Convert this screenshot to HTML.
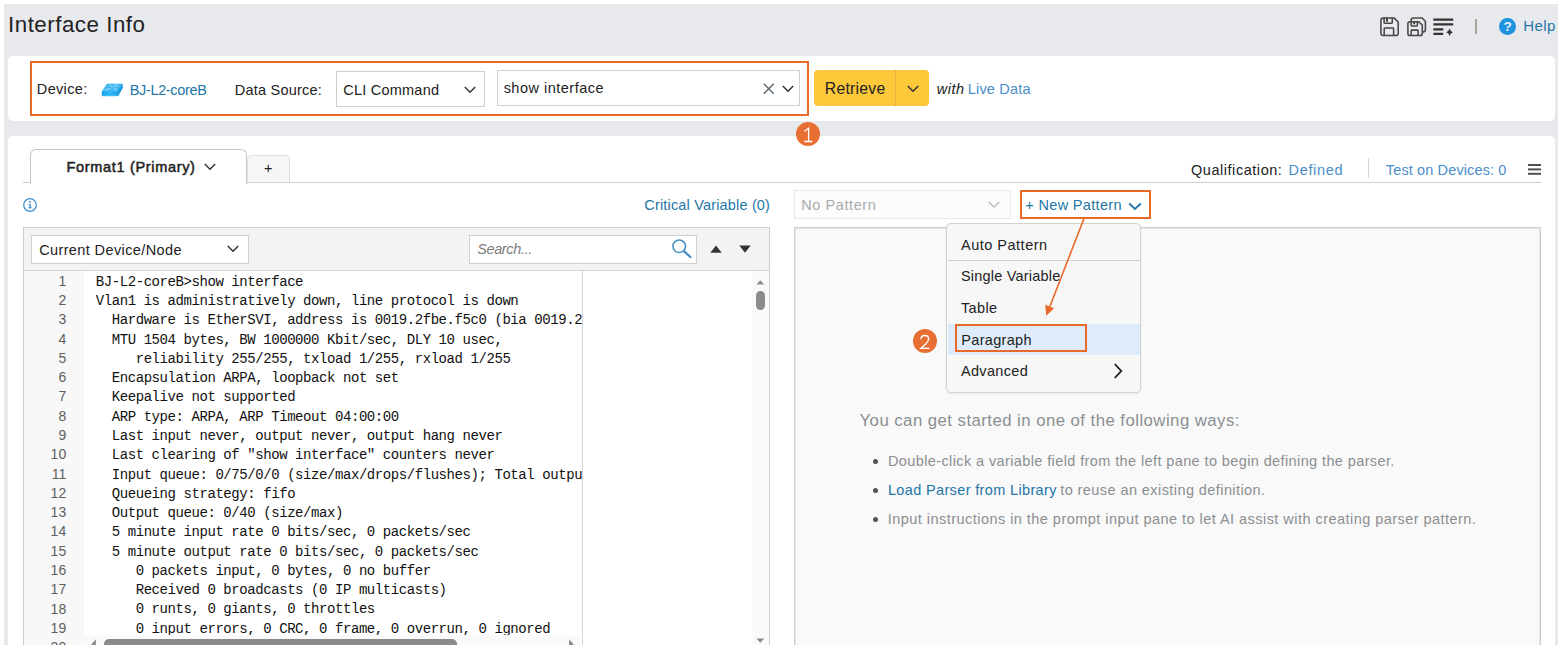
<!DOCTYPE html>
<html><head><meta charset="utf-8">
<style>
*{box-sizing:border-box;margin:0;padding:0}
html,body{width:1561px;height:649px;overflow:hidden;background:#fff}
body{font-family:"Liberation Sans",sans-serif;color:#222;position:relative}
.a{position:absolute}
.t{position:absolute;white-space:nowrap;line-height:1}
.ob{border:2px solid #e8692a}
.sel{background:#fff;border:1px solid #cfcfcf}
.mono{font-family:"Liberation Mono",monospace}
.ln,.cl{height:19.29px;line-height:19.29px;white-space:pre}
.ln{font-family:"Liberation Sans",sans-serif;font-size:14px;letter-spacing:0.1px;color:#606060}
.cl{font-size:14px;letter-spacing:-0.429px;color:#111}
</style></head><body>
<div class="a" style="left:4px;top:4px;width:1554px;height:645px;background:#e8e9ed"></div>
<div class="a" style="left:8px;top:56px;width:1546.5px;height:64.5px;background:#fff;border-radius:5px"></div>
<div class="a" style="left:8px;top:135.5px;width:1546.5px;height:520px;background:#fff;border-radius:5px"></div>

<!-- top panel -->
<div class="a ob" style="left:30px;top:61px;width:779px;height:55px"></div>
<div class="a sel" style="left:336px;top:71px;width:149px;height:36px"></div>
<div class="a sel" style="left:497px;top:70px;width:303px;height:36px"></div>
<div class="a" style="left:814px;top:70px;width:115px;height:36px;background:#fdc93a;border-radius:4px"></div>
<div class="a" style="left:895px;top:70px;width:1px;height:36px;background:#ecae42"></div>
<svg class="a" style="left:101px;top:83.4px" width="23" height="14" viewBox="0 0 23 14"><defs><linearGradient id="dg" x1="0" x2="1"><stop offset="0" stop-color="#1aa2ea"/><stop offset="0.5" stop-color="#2cbcfb"/><stop offset="1" stop-color="#1a9fe6"/></linearGradient></defs><path d="M6 1 H21.3 L16.5 8.6 H1 Z" fill="#45bbf3" stroke="#45bbf3" stroke-width="0.6" stroke-linejoin="round"/><path d="M1 8.6 H16.5 L17 12.8 H1 Z" fill="url(#dg)" stroke="#1fa8ee" stroke-width="0.6" stroke-linejoin="round"/><path d="M21.3 1 L21.7 4.5 L17.2 12.8 L16.5 8.6 Z" fill="#1b9be2" stroke="#1b9be2" stroke-width="0.6" stroke-linejoin="round"/><path d="M4.5 7 L9.3 5.3 M12.3 3.4 L16.8 2 M9 2.2 L10.8 3.6 M13 5 L15.6 7" stroke="#a6defa" stroke-width="0.9" stroke-linecap="round" fill="none"/></svg>
<svg class="a" style="left:463.5px;top:86px" width="12" height="8" viewBox="0 0 12 8"><path d="M0.8 1 L6 6.2 L11.2 1" fill="none" stroke="#333" stroke-width="1.5"/></svg>
<svg class="a" style="left:763px;top:83px" width="12" height="12" viewBox="0 0 12 12"><path d="M0.8 0.8 L10.7 10.7 M10.7 0.8 L0.8 10.7" stroke="#5a6872" stroke-width="1.4"/></svg>
<svg class="a" style="left:781.5px;top:85px" width="12" height="8" viewBox="0 0 12 8"><path d="M0.8 1 L6 6.2 L11.2 1" fill="none" stroke="#333" stroke-width="1.5"/></svg>
<svg class="a" style="left:906.5px;top:85px" width="12" height="8" viewBox="0 0 12 8"><path d="M0.8 1 L6 6.2 L11.2 1" fill="none" stroke="#333" stroke-width="1.5"/></svg>

<!-- circle 1 -->
<div class="a" style="left:796px;top:122px;width:24px;height:24px;border-radius:50%;background:#e86f33"></div>
<svg class="a" style="left:796px;top:122px" width="24" height="24" viewBox="796 122 24 24"><path d="M804.3 131.2 L808.6 128.3 V141.4 M804.2 141.5 H812.4" fill="none" stroke="#fff" stroke-width="1.35"/></svg>

<!-- tabs -->
<div class="a" style="left:23px;top:182px;width:1518px;height:1px;background:#cfcfcf"></div>
<div class="a" style="left:29.5px;top:149px;width:217px;height:35px;background:#fff;border:1.3px solid #c6c9cb;border-bottom:none;border-radius:6px 6px 0 0"></div>
<div class="a" style="left:246.5px;top:155px;width:43.5px;height:27px;background:#f6f6f6;border:1px solid #dedede;border-bottom:none;border-radius:5px 5px 0 0"></div>
<svg class="a" style="left:203.5px;top:163px" width="12" height="8" viewBox="0 0 12 8"><path d="M0.8 1 L6 6.2 L11.2 1" fill="none" stroke="#333" stroke-width="1.4"/></svg>
<div class="a" style="left:1367.5px;top:157.5px;width:1px;height:20px;background:#d8d8d8"></div>
<div class="a" style="left:1528px;top:164.2px;width:13px;height:1.5px;background:#505050;box-shadow:0 4.4px 0 #505050,0 8.8px 0 #505050"></div>

<!-- info row -->
<svg class="a" style="left:22.4px;top:196.6px" width="16" height="16" viewBox="0 0 16 16"><circle cx="8" cy="8" r="6.3" fill="none" stroke="#3a8fd0" stroke-width="1.2"/><rect x="7.3" y="7" width="1.5" height="4" fill="#3a8fd0"/><rect x="6.4" y="10.3" width="3.3" height="1" fill="#3a8fd0"/><rect x="6.6" y="7" width="1.5" height="1" fill="#3a8fd0"/><circle cx="8" cy="5" r="0.95" fill="#3a8fd0"/></svg>

<!-- left pane -->
<div class="a" style="left:23px;top:227px;width:747px;height:430px;background:#fff;border:1px solid #cecece;box-shadow:inset 0 0 0 1px #e9e9e9"></div>
<div class="a" style="left:24px;top:228px;width:745px;height:43px;background:#f3f3f3;border-bottom:1px solid #d6d6d6"></div>
<div class="a sel" style="left:31px;top:234.5px;width:218px;height:29.5px"></div>
<svg class="a" style="left:226.5px;top:245px" width="12" height="8" viewBox="0 0 12 8"><path d="M0.8 1 L6 6.2 L11.2 1" fill="none" stroke="#333" stroke-width="1.5"/></svg>
<div class="a sel" style="left:469px;top:234.5px;width:228px;height:29.5px"></div>
<svg class="a" style="left:670px;top:237px" width="24" height="23" viewBox="0 0 24 23"><circle cx="9.2" cy="9.3" r="6.3" fill="none" stroke="#4590c4" stroke-width="1.5"/><path d="M13.9 14.2 L20.4 20" stroke="#4590c4" stroke-width="2.3" stroke-linecap="round"/></svg>
<svg class="a" style="left:709.5px;top:245px" width="12" height="8" viewBox="0 0 12 8"><path d="M0.3 7.8 L6 0.4 L11.7 7.8 Z" fill="#333"/></svg>
<svg class="a" style="left:738.5px;top:245px" width="12" height="8" viewBox="0 0 12 8"><path d="M0.3 0.4 L6 7.8 L11.7 0.4 Z" fill="#333"/></svg>

<!-- code -->
<div class="a" style="left:24px;top:271px;width:728px;height:378px;overflow:hidden;background:#fff">
 <div class="a" style="left:0;top:0;width:60px;height:400px;background:#f8f8f8"></div>
 <div class="a" style="left:0;top:0.8px;width:42.4px;text-align:right"><div class="ln">1</div><div class="ln">2</div><div class="ln">3</div><div class="ln">4</div><div class="ln">5</div><div class="ln">6</div><div class="ln">7</div><div class="ln">8</div><div class="ln">9</div><div class="ln">10</div><div class="ln">11</div><div class="ln">12</div><div class="ln">13</div><div class="ln">14</div><div class="ln">15</div><div class="ln">16</div><div class="ln">17</div><div class="ln">18</div><div class="ln">19</div><div class="ln">20</div></div>
 <div class="a mono" style="left:71.8px;top:1.7px;width:486.2px;overflow:hidden"><div class="cl">BJ-L2-coreB&gt;show interface</div><div class="cl">Vlan1 is administratively down, line protocol is down</div><div class="cl">  Hardware is EtherSVI, address is 0019.2fbe.f5c0 (bia 0019.2fbe.f5c0)</div><div class="cl">  MTU 1504 bytes, BW 1000000 Kbit/sec, DLY 10 usec,</div><div class="cl">     reliability 255/255, txload 1/255, rxload 1/255</div><div class="cl">  Encapsulation ARPA, loopback not set</div><div class="cl">  Keepalive not supported</div><div class="cl">  ARP type: ARPA, ARP Timeout 04:00:00</div><div class="cl">  Last input never, output never, output hang never</div><div class="cl">  Last clearing of &quot;show interface&quot; counters never</div><div class="cl">  Input queue: 0/75/0/0 (size/max/drops/flushes); Total output drops: 0</div><div class="cl">  Queueing strategy: fifo</div><div class="cl">  Output queue: 0/40 (size/max)</div><div class="cl">  5 minute input rate 0 bits/sec, 0 packets/sec</div><div class="cl">  5 minute output rate 0 bits/sec, 0 packets/sec</div><div class="cl">     0 packets input, 0 bytes, 0 no buffer</div><div class="cl">     Received 0 broadcasts (0 IP multicasts)</div><div class="cl">     0 runts, 0 giants, 0 throttles</div><div class="cl">     0 input errors, 0 CRC, 0 frame, 0 overrun, 0 ignored</div><div class="cl">     0 packets output, 0 bytes, 0 underruns</div></div>
 <div class="a" style="left:558px;top:0;width:1px;height:400px;background:#d6d6d6"></div>
</div>
<!-- scrollbars -->
<div class="a" style="left:752px;top:271px;width:17px;height:378px;background:#fafafa"></div>
<div class="a" style="left:755.6px;top:291.3px;width:9.4px;height:18.7px;border-radius:4.7px;background:#8b8b8b"></div>
<svg class="a" style="left:756px;top:280px" width="9" height="5" viewBox="0 0 9 5"><path d="M0.3 4.6 L4.3 0.2 L8.3 4.6 Z" fill="#8c8c8c"/></svg>
<svg class="a" style="left:756px;top:638.1px" width="9" height="5" viewBox="0 0 9 5"><path d="M0.3 0.4 L4.3 4.8 L8.3 0.4 Z" fill="#8c8c8c"/></svg>
<div class="a" style="left:84px;top:635px;width:496px;height:13px;background:#fafafa"></div>
<div class="a" style="left:104px;top:639px;width:353px;height:12px;border-radius:5px;background:#8b8b8b"></div>
<svg class="a" style="left:91.3px;top:639.4px" width="5" height="10" viewBox="0 0 5 10"><path d="M4.9 0.2 L0.3 5.2 L4.9 10 Z" fill="#8a8a8a"/></svg>
<svg class="a" style="left:569px;top:639.4px" width="5" height="10" viewBox="0 0 5 10"><path d="M0.1 0.2 L4.7 5.2 L0.1 10 Z" fill="#8a8a8a"/></svg>

<!-- right pane -->
<div class="a" style="left:794px;top:190px;width:217px;height:28.5px;background:#fcfcfc;border:1px solid #eaeaea"></div>
<svg class="a" style="left:988px;top:201px" width="12" height="8" viewBox="0 0 12 8"><path d="M0.8 1 L6 6.2 L11.2 1" fill="none" stroke="#b5b5b5" stroke-width="1.3"/></svg>
<div class="a ob" style="left:1020px;top:190px;width:131px;height:28.5px"></div>
<svg class="a" style="left:1128px;top:202px" width="14" height="9" viewBox="0 0 14 9"><path d="M1.2 1.5 L7 7 L12.8 1.5" fill="none" stroke="#2377a8" stroke-width="1.8"/></svg>
<div class="a" style="left:794px;top:227px;width:747px;height:430px;background:#f9f9f9;border:1px solid #cecece;box-shadow:inset 0 0 0 1px #e6e6e6"></div>
<div class="a" style="left:873px;top:459px;width:5.4px;height:5.4px;border-radius:50%;background:#555"></div>
<div class="a" style="left:873px;top:487.6px;width:5.4px;height:5.4px;border-radius:50%;background:#555"></div>
<div class="a" style="left:873px;top:516.6px;width:5.4px;height:5.4px;border-radius:50%;background:#555"></div>

<!-- menu -->
<div class="a" style="left:946px;top:223px;width:195px;height:169.5px;background:#f7f7f7;border:1px solid #d2d2d2;border-radius:5px;box-shadow:0 1px 2px rgba(0,0,0,.08)"></div>
<div class="a" style="left:947.5px;top:259.6px;width:192.5px;height:1px;background:#d0d0d0"></div>
<div class="a" style="left:947.5px;top:324.2px;width:192.5px;height:30.4px;background:#ddecf8"></div>
<svg class="a" style="left:1113px;top:363px" width="10" height="16" viewBox="0 0 10 16"><path d="M1.8 1.2 L8.3 8 L1.8 14.8" fill="none" stroke="#222" stroke-width="1.8"/></svg>
<div class="a ob" style="left:955.3px;top:324.3px;width:131.6px;height:27.3px"></div>

<!-- circle 2 + arrow -->
<div class="a" style="left:913px;top:329px;width:24px;height:24px;border-radius:50%;background:#e86f33"></div>
<svg class="a" style="left:913px;top:329px" width="24" height="24" viewBox="913 329 24 24"><path d="M920.9 339.2 C921 336.8 922.8 335.5 924.8 335.5 C927 335.5 928.6 337 928.6 339 C928.6 340.8 927.6 342 926 343.7 L920.9 348.4 H929.4" fill="none" stroke="#fff" stroke-width="1.35"/></svg>
<svg class="a" style="left:1030px;top:215px" width="70" height="110" viewBox="0 0 70 110"><path d="M54 3.5 L19.5 92.5" stroke="#e8692a" stroke-width="1.6" fill="none"/><path d="M16.2 100.8 L15.2 89.8 L24.2 93.3 Z" fill="#e8692a"/></svg>

<!-- header icons -->
<svg class="a" style="left:1379px;top:16px" width="22" height="22" viewBox="0 0 22 22" fill="none" stroke="#474747" stroke-width="1.55" stroke-linejoin="round" stroke-linecap="round"><path d="M4.2 1.9 H15 L19.2 6 V17.2 Q19.2 19.5 16.9 19.5 H4.2 Q1.9 19.5 1.9 17.2 V4.2 Q1.9 1.9 4.2 1.9 Z"/><path d="M5.1 2 V6.6 Q5.1 7.3 5.8 7.3 H12.6 Q13.3 7.3 13.3 6.6 V2"/><path d="M8 2.6 V5" stroke-width="2"/><path d="M5.2 19.3 V12.7 Q5.2 12 5.9 12 H13.9 Q14.6 12 14.6 12.7 V19.3"/></svg>
<svg class="a" style="left:1406px;top:16px" width="22" height="22" viewBox="0 0 22 22" fill="none" stroke="#474747" stroke-width="1.55" stroke-linejoin="round" stroke-linecap="round"><path d="M5.2 5.5 V4 Q5.2 1.9 7.3 1.9 H16.2 L19.4 5.5 V13.6 Q19.4 16 17 16"/><path d="M4 5.7 H12.6 L16.3 9 V17.4 Q16.3 19.5 14.2 19.5 H4 Q1.9 19.5 1.9 17.4 V7.8 Q1.9 5.7 4 5.7 Z"/><path d="M5.1 5.9 V9.3 Q5.1 10 5.8 10 H10.7 Q11.4 10 11.4 9.3 V5.9"/><path d="M8.1 6.3 V7.6" stroke-width="2"/><path d="M5.2 19.3 V14.8 Q5.2 14.1 5.9 14.1 H11.4 Q12.1 14.1 12.1 14.8 V19.3"/></svg>
<svg class="a" style="left:1433px;top:17px" width="22" height="20" viewBox="0 0 22 20"><rect x="0.3" y="1.5" width="20" height="2.3" rx="0.6" fill="#333"/><rect x="0.3" y="6.2" width="20" height="2.3" rx="0.6" fill="#333"/><rect x="0.3" y="11.2" width="10" height="2.3" rx="0.6" fill="#333"/><rect x="0.3" y="15.8" width="10" height="2.3" rx="0.6" fill="#333"/><path d="M16.6 11.5 Q17.3 14.5 20.1 15.2 Q17.3 15.9 16.6 18.9 Q15.9 15.9 13.1 15.2 Q15.9 14.5 16.6 11.5 Z" fill="#333"/></svg>
<div class="a" style="left:1475.3px;top:19px;width:1.6px;height:15px;background:#a9a49c"></div>
<div class="a" style="left:1499.2px;top:18px;width:16.8px;height:16.8px;border-radius:50%;background:#1e94de"></div>
<div class="t" style="left:1503.6px;top:19.6px;font-size:13.5px;font-weight:bold;color:#e9f3fb">?</div>

<div class="t" id="title" style="left:8.02px;top:13.92px;font-size:22.3px;letter-spacing:0.520px;color:#222">Interface Info</div>
<div class="t" id="dev" style="left:36.83px;top:81.73px;font-size:14.5px;letter-spacing:0.333px;color:#222">Device:</div>
<div class="t" id="bj" style="left:129.63px;top:83.33px;font-size:14.5px;letter-spacing:-0.327px;color:#2377a8">BJ-L2-coreB</div>
<div class="t" id="ds" style="left:234.73px;top:82.73px;font-size:14.5px;letter-spacing:0.231px;color:#222">Data Source:</div>
<div class="t" id="cli" style="left:343.24px;top:82.73px;font-size:14.5px;letter-spacing:0.230px;color:#222">CLI Command</div>
<div class="t" id="shi" style="left:503.64px;top:81.13px;font-size:14.5px;letter-spacing:0.492px;color:#222">show interface</div>
<div class="t" id="ret" style="left:824.85px;top:80.51px;font-size:15.7px;letter-spacing:0.266px;color:#222">Retrieve</div>
<div class="t" id="with" style="left:936.65px;top:82.23px;font-size:14.5px;letter-spacing:0.534px;color:#222;font-style:italic">with</div>
<div class="t" id="live" style="left:967.73px;top:82.23px;font-size:14.5px;letter-spacing:0.200px;color:#4a8dca">Live Data</div>
<div class="t" id="help" style="left:1523.20px;top:18.10px;font-size:15px;letter-spacing:0.435px;color:#2377a8">Help</div>
<div class="t" id="fmt" style="left:66.51px;top:160.03px;font-size:14.5px;letter-spacing:0.676px;color:#222;-webkit-text-stroke:0.5px #222">Format1 (Primary)</div>
<div class="t" id="plus" style="left:263.99px;top:160.73px;font-size:14.5px;letter-spacing:0.000px;color:#222">+</div>
<div class="t" id="qual" style="left:1190.98px;top:162.53px;font-size:14.5px;letter-spacing:0.545px;color:#222">Qualification:</div>
<div class="t" id="defd" style="left:1288.53px;top:162.53px;font-size:14.5px;letter-spacing:0.670px;color:#4a8dca">Defined</div>
<div class="t" id="tod" style="left:1385.82px;top:162.53px;font-size:14.5px;letter-spacing:0.125px;color:#4a8dca">Test on Devices: 0</div>
<div class="t" id="crit" style="left:644.34px;top:197.53px;font-size:14.5px;letter-spacing:0.170px;color:#2377a8">Critical Variable (0)</div>
<div class="t" id="cdn" style="left:39.14px;top:242.93px;font-size:14.5px;letter-spacing:0.387px;color:#222">Current Device/Node</div>
<div class="t" id="srch" style="left:477.16px;top:242.13px;font-size:14.5px;letter-spacing:-0.372px;color:#7d7d7d;font-style:italic">Search...</div>
<div class="t" id="nop" style="left:801.33px;top:197.83px;font-size:14.5px;letter-spacing:0.568px;color:#ababab">No Pattern</div>
<div class="t" id="newp" style="left:1025.29px;top:197.53px;font-size:14.5px;letter-spacing:0.330px;color:#2377a8">+ New Pattern</div>
<div class="t" id="ycan" style="left:859.51px;top:412.68px;font-size:16.8px;letter-spacing:0.446px;color:#8b8f92">You can get started in one of the following ways:</div>
<div class="t" id="b1" style="left:887.93px;top:453.83px;font-size:14.5px;letter-spacing:0.391px;color:#8b8f92">Double-click a variable field from the left pane to begin defining the parser.</div>
<div class="t" id="b2a" style="left:887.93px;top:482.53px;font-size:14.5px;letter-spacing:0.355px;color:#2377a8">Load Parser from Library</div>
<div class="t" id="b2b" style="left:1060.21px;top:482.53px;font-size:14.5px;letter-spacing:0.421px;color:#8b8f92">to reuse an existing definition.</div>
<div class="t" id="b3" style="left:887.79px;top:511.53px;font-size:14.5px;letter-spacing:0.459px;color:#8b8f92">Input instructions in the prompt input pane to let AI assist with creating parser pattern.</div>
<div class="t" id="m1" style="left:960.98px;top:238.03px;font-size:14.5px;letter-spacing:0.503px;color:#222">Auto Pattern</div>
<div class="t" id="m2" style="left:960.96px;top:269.33px;font-size:14.5px;letter-spacing:0.199px;color:#222">Single Variable</div>
<div class="t" id="m3" style="left:960.92px;top:301.03px;font-size:14.5px;letter-spacing:0.380px;color:#222">Table</div>
<div class="t" id="m4" style="left:961.33px;top:332.73px;font-size:14.5px;letter-spacing:0.306px;color:#222">Paragraph</div>
<div class="t" id="m5" style="left:960.98px;top:363.53px;font-size:14.5px;letter-spacing:0.322px;color:#222">Advanced</div>
<div class="a" style="left:0;top:645px;width:1561px;height:4px;background:#fff"></div>
</body></html>
